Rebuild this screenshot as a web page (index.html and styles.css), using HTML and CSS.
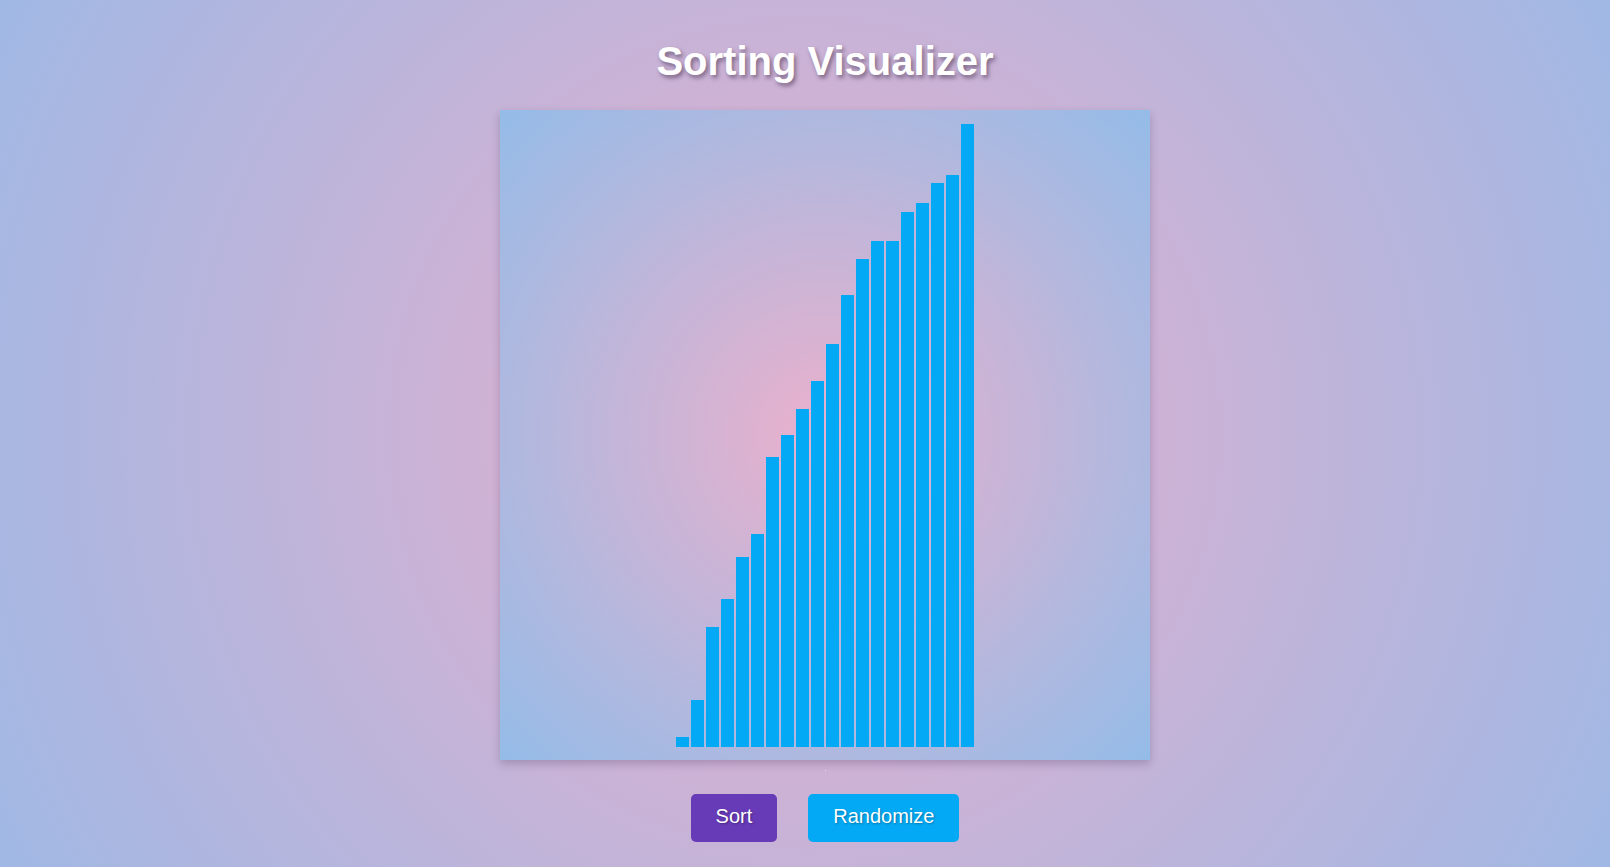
FILE: index.html
```html
<!DOCTYPE html>
<html lang="en">
<head>
<meta charset="utf-8">
<title>Sorting Visualizer</title>
<link rel="stylesheet" href="styles.css">
</head>
<body>
<main class="app">
  <h1 class="title">Sorting Visualizer</h1>
  <div class="board">
    <div class="bar" style="height:10px"></div>
    <div class="bar" style="height:47px"></div>
    <div class="bar" style="height:120px"></div>
    <div class="bar" style="height:148px"></div>
    <div class="bar" style="height:190px"></div>
    <div class="bar" style="height:213px"></div>
    <div class="bar" style="height:290px"></div>
    <div class="bar" style="height:312px"></div>
    <div class="bar" style="height:338px"></div>
    <div class="bar" style="height:366px"></div>
    <div class="bar" style="height:403px"></div>
    <div class="bar" style="height:452px"></div>
    <div class="bar" style="height:488px"></div>
    <div class="bar" style="height:506px"></div>
    <div class="bar" style="height:506px"></div>
    <div class="bar" style="height:535px"></div>
    <div class="bar" style="height:544px"></div>
    <div class="bar" style="height:564px"></div>
    <div class="bar" style="height:572px"></div>
    <div class="bar" style="height:623px"></div>
  </div>
  <div class="status"></div>
  <div class="controls">
    <button class="btn btn-sort">Sort</button>
    <button class="btn btn-random">Randomize</button>
  </div>
</main>
</body>
</html>
```

FILE: styles.css
```css
html, body {
  margin: 0;
  padding: 0;
}

body {
  min-height: 100vh;
  font-family: "Liberation Sans", Arial, sans-serif;
  background: radial-gradient(circle at 50% 50%, #e8afcc 0%, #a0b8e4 100%);
  overflow: hidden;
}

.app {
  display: flex;
  flex-direction: column;
  align-items: center;
  padding-left: 40px;
}

.title {
  margin: 38px 0 0;
  font-size: 40px;
  line-height: 46px;
  font-weight: bold;
  color: #ffffff;
  text-shadow: 2px 3px 4px rgba(60, 40, 70, 0.55);
}

.board {
  box-sizing: border-box;
  width: 650px;
  height: 650px;
  margin-top: 26px;
  padding: 0 0 13px 176px;
  display: flex;
  align-items: flex-end;
  gap: 2px;
  background: radial-gradient(circle at 50% 50%, #eab0cc 0%, #94bce8 100%);
  box-shadow: 0 4px 8px rgba(60, 40, 80, 0.25);
}

.bar {
  width: 13px;
  flex: 0 0 13px;
  background: #03a9f4;
}

.status {
  width: 1px;
  height: 1px;
  margin-top: 10px;
  background: rgba(255, 255, 255, 0.6);
}

.controls {
  display: flex;
  gap: 31px;
  margin-top: 23px;
}

.btn {
  box-sizing: border-box;
  height: 48px;
  padding: 0 25px 3px;
  border: none;
  border-radius: 5px;
  font-family: "Liberation Sans", Arial, sans-serif;
  font-size: 20px;
  color: #ffffff;
  text-shadow: 1px 1px 2px rgba(0, 0, 0, 0.3);
  cursor: pointer;
}

.btn-sort {
  background: #673ab7;
}

.btn-random {
  background: #03a9f4;
}
```
